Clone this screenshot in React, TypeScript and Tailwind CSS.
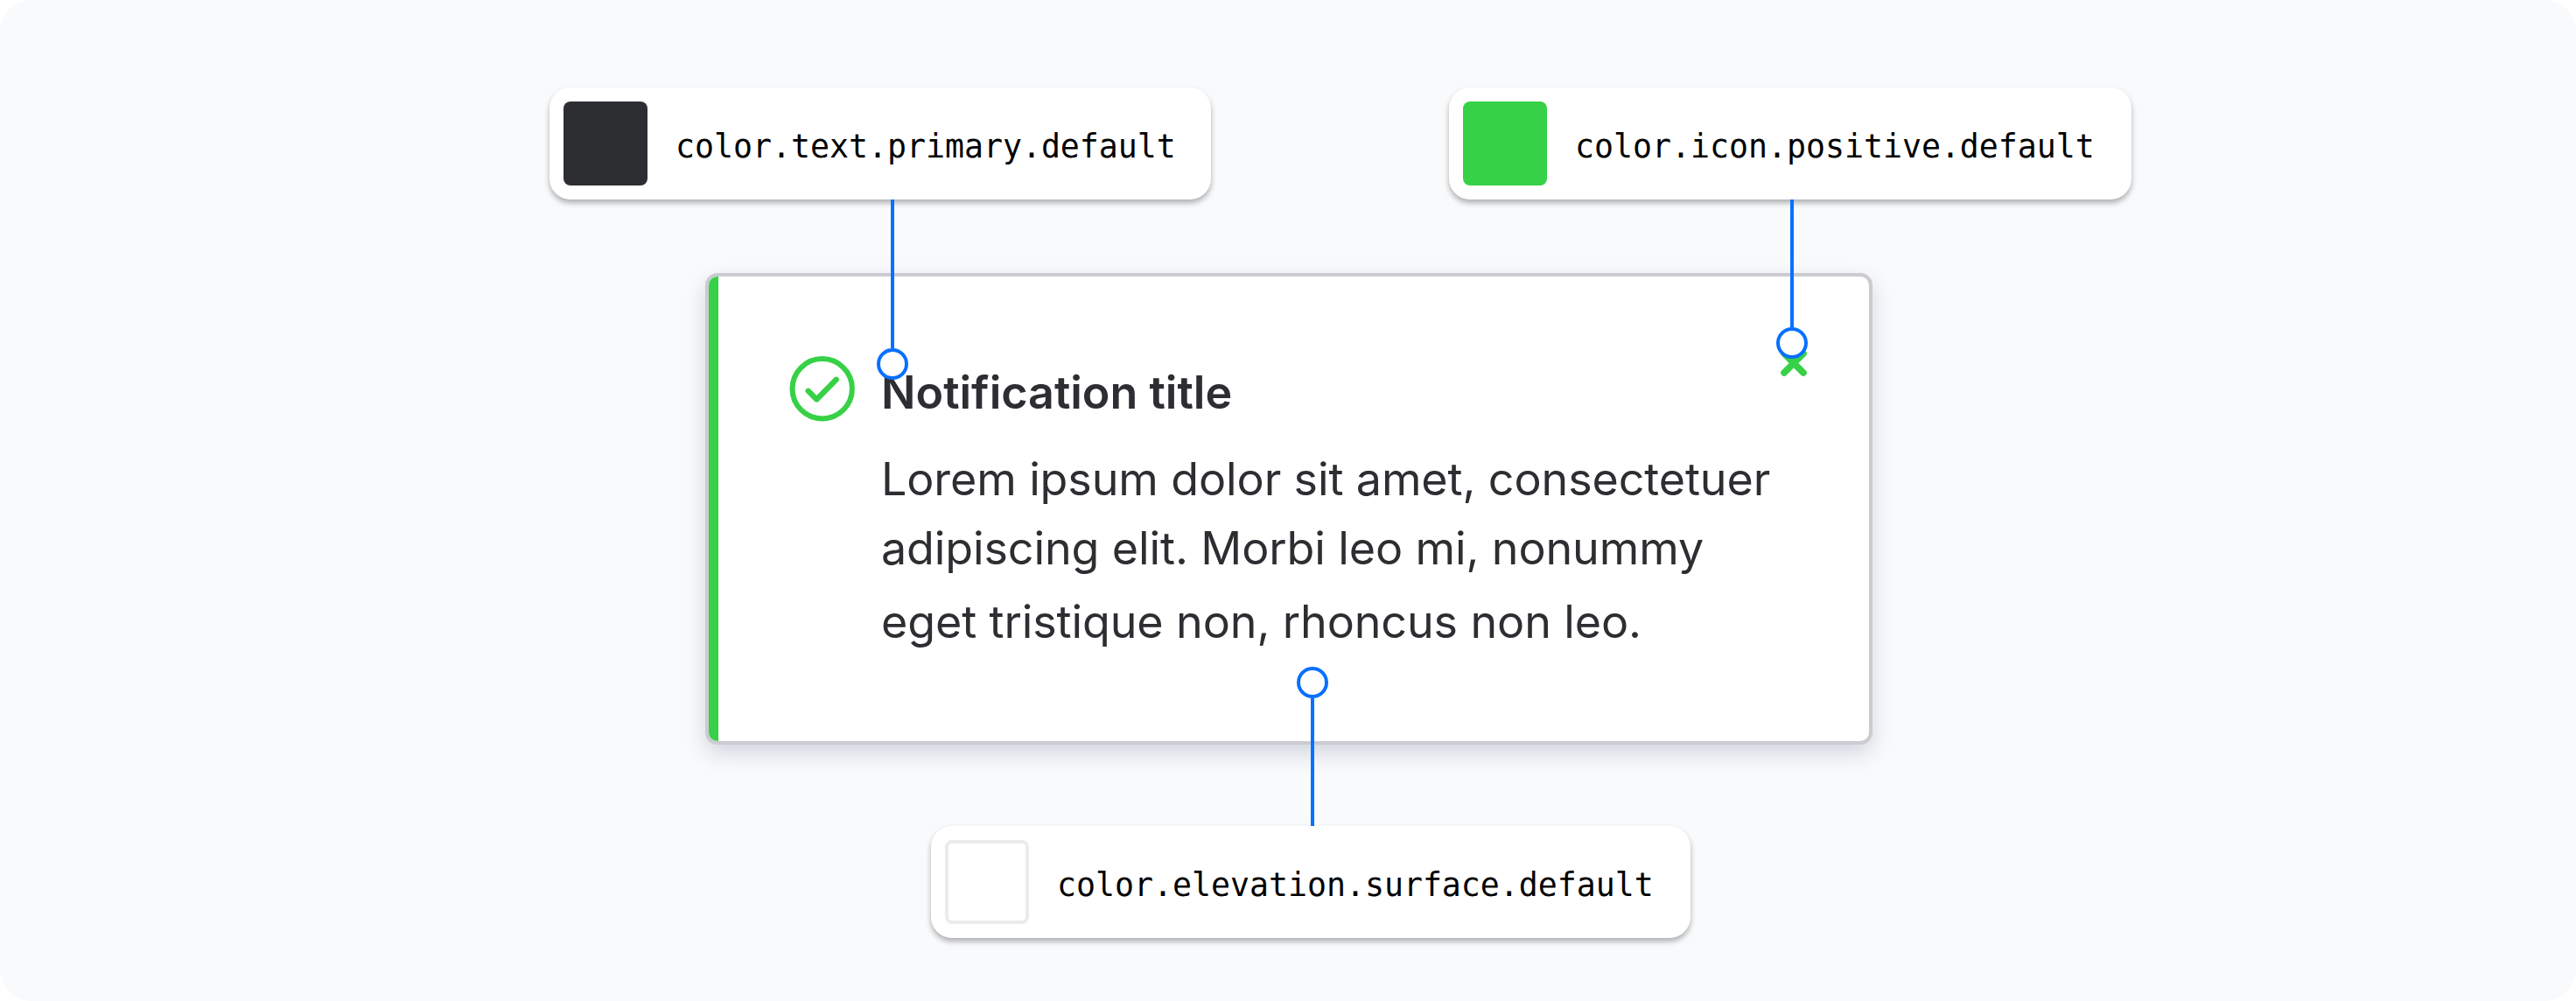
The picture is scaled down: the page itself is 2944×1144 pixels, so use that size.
import type { ReactNode } from "react";

function TokenChip({ name, swatch, className, children }: { name: string; swatch: string; className: string; children?: ReactNode }) {
  return (
    <div className={`relative flex h-32 shrink-0 items-center gap-8 rounded-3xl bg-white pl-4 shadow-[0_4px_6px_rgba(0,0,0,0.3)] ${className}`}>
      <div className={`size-24 shrink-0 rounded-lg ${swatch}`} />
      <span className="whitespace-nowrap pt-[7px] font-['DejaVu_Sans_Mono',monospace] text-[36.54px] leading-[64px] text-black">{name}</span>
      {children}
    </div>
  );
}

function Pin({ className, line, up = false }: { className: string; line: string; up?: boolean }) {
  return (
    <div className={`absolute z-10 flex w-9 items-center ${up ? "flex-col-reverse" : "flex-col"} ${className}`}>
      <div className={`w-1 bg-[#0870ff] ${line}`} />
      <div className="size-9 shrink-0 rounded-full border-4 border-[#0870ff] bg-white" />
    </div>
  );
}

export default function App() {
  return (
    <main className="h-[1144px] w-[2944px] bg-white">
      <div className="flex h-full flex-col overflow-hidden rounded-[36px] bg-[#f9fafc] pt-[100px]">
        <div className="flex gap-[272px] pl-[628px]">
          <TokenChip name="color.text.primary.default" swatch="bg-[#2d2e32]" className="w-[756px]">
            <Pin className="left-[374px] top-32" line="h-[170px]" />
          </TokenChip>
          <TokenChip name="color.icon.positive.default" swatch="bg-[#37d147]" className="w-[780px]">
            <Pin className="left-[374px] top-32" line="h-[146px]" />
          </TokenChip>
        </div>

        <section className="ml-[806px] mt-21 flex h-[539px] w-[1334px] overflow-hidden rounded-[14px] border-4 border-[#cbcbd2] bg-white font-[Inter,sans-serif] text-[#2d2e32] shadow-[0_10px_24px_rgba(9,30,66,0.16)]">
          <div className="w-[11px] shrink-0 bg-[#37d147]" />
          <svg className="ml-[81px] mt-[91px] size-[76px] shrink-0" viewBox="0 0 76 76" fill="none" stroke="#37d147" strokeWidth="6">
            <circle cx="37.7" cy="37.3" r="34.2" />
            <path d="M21.7 39.8 31.3 49.4 53.7 26.8" strokeWidth="6.4" strokeLinecap="round" strokeLinejoin="round" />
          </svg>
          <div className="ml-[29px] mt-[93px] grow whitespace-nowrap text-[52px]">
            <h1 className="h-[99px] font-semibold leading-[80px]">Notification title</h1>
            <p className="leading-[80px] tracking-[-0.11px]">Lorem ipsum dolor sit amet, consectetuer</p>
            <p className="-mt-px leading-[80px] tracking-[-0.11px]">adipiscing elit. Morbi leo mi, nonummy</p>
            <p className="mt-1 leading-[80px] tracking-[-0.11px]">eget tristique non, rhoncus non leo.</p>
          </div>
          <svg className="mr-[70px] mt-[83px] size-8 shrink-0" viewBox="0 0 32 32" fill="none" stroke="#37d147" strokeWidth="7.6" strokeLinecap="round">
            <path d="M5 5 27 27M27 5 5 27" />
          </svg>
        </section>

        <TokenChip name="color.elevation.surface.default" swatch="border-4 border-[#ebebeb] bg-white" className="ml-[1064px] mt-[93px] w-[868px]">
          <Pin className="bottom-32 left-[418px]" line="h-[146px]" up />
        </TokenChip>
      </div>
    </main>
  );
}
